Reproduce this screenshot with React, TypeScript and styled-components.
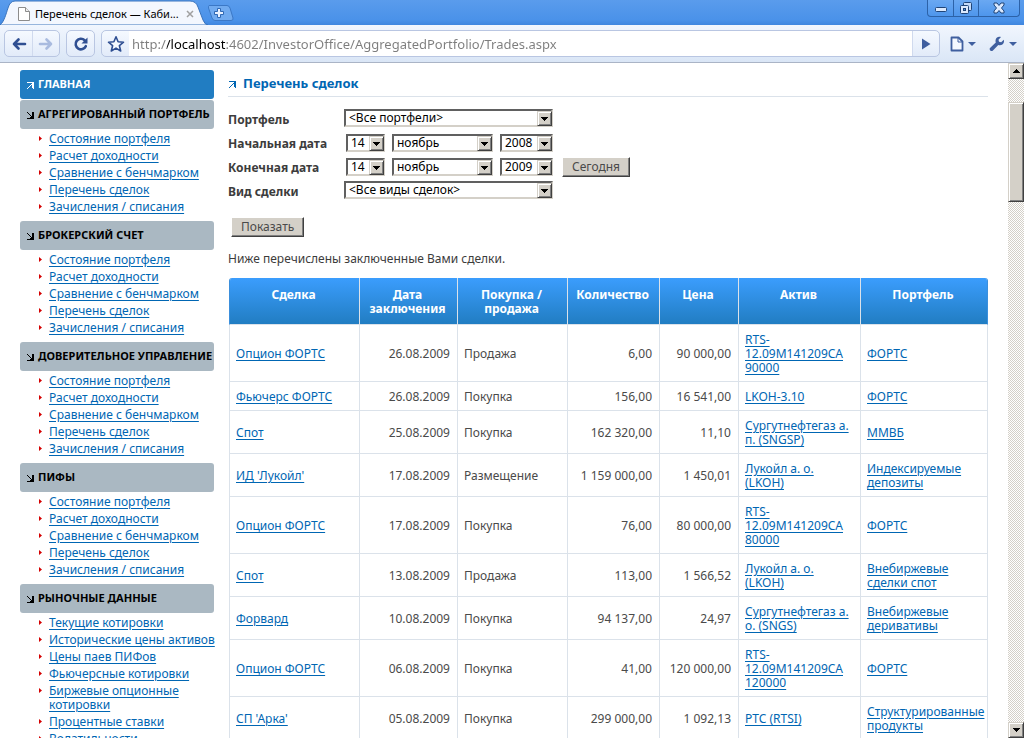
import React, { useState } from 'react';
import styled, { createGlobalStyle, css } from 'styled-components';

const GlobalStyle = createGlobalStyle`
  *, *::before, *::after { box-sizing: border-box; }
  html, body { height: 100%; margin: 0; }
  body {
    overflow: hidden;
    background: #fff;
    color: #3c3c3c;
    font: 12px/14px 'Noto Sans', sans-serif;
  }
  button, input, select { font: inherit; color: inherit; margin: 0; }
`;

/* ---------- browser window ---------- */

const Window = styled.div`
  display: flex;
  flex-direction: column;
  height: 100vh;
`;

const TitleBar = styled.header`
  display: flex;
  align-items: flex-start;
  flex: none;
  height: 25px;
  background: linear-gradient(#5a9cec, #4a92e9 80%, #3f86df);
`;

const Tab = styled.div`
  position: relative;
  display: flex;
  align-items: center;
  gap: 4px;
  width: 208px;
  height: 25px;
  padding: 2px 14px 0 17px;
  color: #000;
  font-size: 11px;
`;

const TabShape = styled.svg`
  position: absolute;
  inset: 0;
  z-index: 0;
`;

const TabTitle = styled.span`
  position: relative;
  flex: 1;
  white-space: nowrap;
`;

const PlainButton = styled.button`
  position: relative;
  display: flex;
  align-items: center;
  justify-content: center;
  padding: 0;
  border: 0;
  background: none;
`;

const NewTab = styled(PlainButton)`
  width: 26px;
  height: 16px;
  margin-top: 5px;
`;

const WindowButtons = styled.div`
  display: flex;
  height: 17px;
  margin-left: auto;
  margin-right: 4px;
  border: 1px solid #2c62a8;
  border-top: 0;
  border-radius: 0 0 4px 4px;
  background: linear-gradient(#6aa8f2, #4e96ec);
`;

const WindowButton = styled(PlainButton)<{ $wide?: boolean }>`
  width: ${(p) => (p.$wide ? 41 : 25)}px;
  & + & { border-left: 1px solid #2c62a8; }
`;

const Toolbar = styled.div`
  display: flex;
  align-items: center;
  flex: none;
  gap: 6px;
  height: 38px;
  padding: 0 4px;
  border-bottom: 1px solid #aab4c6;
  background: linear-gradient(#f1f6fe, #dae6f6);
`;

const Group = styled.div<{ $grow?: boolean }>`
  display: flex;
  flex: ${(p) => (p.$grow ? '1' : 'none')};
  height: 27px;
  border: 1px solid #b9c6e2;
  border-radius: 5px;
  background: linear-gradient(#f5f9ff, #e2ebf9);
  overflow: hidden;
`;

const ToolButton = styled(PlainButton)<{ $divided?: boolean }>`
  width: 27px;
  height: 25px;
  ${(p) => p.$divided && css`border-left: 1px solid #d0daee;`}
`;

const MenuButton = styled(PlainButton)`
  gap: 4px;
  width: 34px;
  height: 27px;
`;

const Address = styled.input`
  flex: 1;
  min-width: 0;
  height: 25px;
  padding: 0 3px;
  border: 0;
  outline: 0;
  background:
    linear-gradient(90deg, #7d7d7d 38px, #000 38px 97px, #7d7d7d 97px) text;
  color: transparent;
  font-size: 13px;
`;

const AddressBox = styled.div`
  display: flex;
  flex: 1;
  background: #fff;
`;

const Viewport = styled.div`
  display: flex;
  flex: 1;
  min-height: 0;
`;

const Page = styled.div`
  display: flex;
  align-items: flex-start;
  flex: 1;
  gap: 14px;
  min-width: 0;
  padding: 7px 20px 0;
  overflow: hidden;
`;

const ScrollBar = styled.div`
  display: flex;
  flex-direction: column;
  flex: none;
  width: 16px;
  background: repeating-conic-gradient(#d4d0c8 0 25%, #fff 0 50%) 0 0 / 2px 2px;
`;

const raised = css`
  border: 1px solid;
  border-color: #d4d0c8 #404040 #404040 #d4d0c8;
  box-shadow: inset 1px 1px #fff, inset -1px -1px #808080;
  background: #d4d0c8;
`;

const ScrollButton = styled(PlainButton)`
  flex: none;
  height: 16px;
  ${raised}
`;

const ScrollTrack = styled.div`
  flex: 1;
  padding-top: 23px;
`;

const ScrollThumb = styled.div`
  height: 100px;
  ${raised}
`;

/* ---------- side navigation ---------- */

const Nav = styled.nav`
  flex: none;
  width: 194px;
`;

const NavHeading = styled.a<{ $active?: boolean }>`
  display: flex;
  align-items: center;
  gap: 4px;
  height: 29px;
  padding: 0 0 1px 7px;
  margin-bottom: ${(p) => (p.$active ? 1 : 0)}px;
  border-radius: 3px;
  background: ${(p) => (p.$active ? '#217dc2' : '#aab8c2')};
  color: ${(p) => (p.$active ? '#fff' : '#000')};
  font: bold 11px/14px 'Noto Sans', sans-serif;
  text-decoration: none;
  text-transform: uppercase;
  white-space: nowrap;
`;

const NavList = styled.ul`
  margin: 0;
  padding: 3px 0 4px 19px;
  list-style: none;
`;

const NavItem = styled.li`
  display: flex;
  gap: 7px;
  margin-bottom: 3px;
  white-space: pre;
`;

const Bullet = styled.svg`
  flex: none;
  margin-top: 4px;
`;

const Link = styled.a`
  color: #0066b3;
  text-decoration: underline;
  text-underline-offset: 2px;
`;

/* ---------- main column ---------- */

const Main = styled.main`
  flex: 1;
  min-width: 0;
`;

const Title = styled.h1`
  display: flex;
  align-items: center;
  gap: 7px;
  height: 27px;
  margin: 0 0 10px;
  padding-left: 1px;
  border-bottom: 1px solid #dbe2ea;
  color: #0066b3;
  font: bold 13px/18px 'Noto Sans', sans-serif;
`;

const Row = styled.div`
  display: flex;
  align-items: center;
  height: 24px;
`;

const Label = styled.label`
  width: 116px;
  padding-top: 2px;
  font-weight: bold;
`;

const Fields = styled.div<{ $inset?: boolean }>`
  display: flex;
  align-items: center;
  gap: 7px;
  padding: ${(p) => (p.$inset ? '0 0 0 2px' : '0 0 2px')};
`;

const SelectBox = styled.span<{ $width: number }>`
  position: relative;
  display: flex;
  width: ${(p) => p.$width}px;
  height: 18px;
  border: 2px solid;
  border-color: #606060 #d4d0c8 #d4d0c8 #606060;
  background: #fff;
`;

const Select = styled.select`
  width: 100%;
  padding: 0 3px;
  border: 0;
  outline: 0;
  appearance: none;
  background: none;
  color: #000;
  line-height: 14px;
`;

const SelectArrow = styled.span`
  position: absolute;
  top: 0;
  right: -1px;
  display: flex;
  align-items: center;
  justify-content: center;
  width: 15px;
  height: 15px;
  pointer-events: none;
  ${raised}
`;

const Button = styled.button`
  height: 20px;
  padding: 0 9px;
  border: 1px solid;
  border-color: #fff #404040 #404040 #fff;
  box-shadow: inset -1px -1px #808080;
  background: #d4d0c8;
  color: #4a4a4a;
  ${SelectBox} + & { margin-left: 2px; }
`;

const Submit = styled.div`
  padding: 14px 3px 15px;
`;

const Note = styled.p`
  margin: 0 0 12px;
`;

const TableArea = styled.div`
  padding-left: 1px;
`;

const Table = styled.table`
  width: 100%;
  table-layout: fixed;
  border-spacing: 0;
`;

const Th = styled.th`
  height: 47px;
  padding: 10px 5px 0 3px;
  border-right: 1px solid #dbe2ea;
  border-bottom: 1px solid #dbe2ea;
  background: linear-gradient(#3b9dfd, #217dc2);
  background-clip: padding-box;
  color: #fff;
  vertical-align: top;
  white-space: pre;
  &:first-child { border-top-left-radius: 3px; border-left: 1px solid #3b8fdc; }
  &:last-child { border-top-right-radius: 3px; border-right-color: #3b8fdc; }
`;

const Td = styled.td<{ $right?: boolean }>`
  padding: 8px 7px 6px 6px;
  border-right: 1px solid #dbe2ea;
  border-bottom: 1px solid #dbe2ea;
  color: #4a4a4a;
  text-align: ${(p) => (p.$right ? 'right' : 'left')};
  white-space: pre;
  &:first-child { border-left: 1px solid #dbe2ea; }
`;

/* ---------- data ---------- */

const accountLinks = [
  'Состояние портфеля',
  'Расчет доходности',
  'Сравнение с бенчмарком',
  'Перечень сделок',
  'Зачисления / списания',
];

const sections = [
  { title: 'Агрегированный портфель', links: accountLinks },
  { title: 'Брокерский счет', links: accountLinks },
  { title: 'Доверительное управление', links: accountLinks },
  { title: 'ПИФы', links: accountLinks },
  {
    title: 'Рыночные данные',
    links: [
      'Текущие котировки',
      'Исторические цены активов',
      'Цены паев ПИФов',
      'Фьючерсные котировки',
      'Биржевые опционные\nкотировки',
      'Процентные ставки',
      'Волатильности',
    ],
  },
];

const columns = [
  { title: 'Сделка', width: 131 },
  { title: 'Дата\nзаключения', width: 98 },
  { title: 'Покупка /\nпродажа', width: 110 },
  { title: 'Количество', width: 92 },
  { title: 'Цена', width: 79 },
  { title: 'Актив', width: 122 },
  { title: 'Портфель', width: 127 },
];

const trades = [
  ['Опцион ФОРТС', '26.08.2009', 'Продажа', '6,00', '90 000,00', 'RTS-\n12.09M141209CA\n90000', 'ФОРТС'],
  ['Фьючерс ФОРТС', '26.08.2009', 'Покупка', '156,00', '16 541,00', 'LKOH-3.10', 'ФОРТС'],
  ['Спот', '25.08.2009', 'Покупка', '162 320,00', '11,10', 'Сургутнефтегаз а.\nп. (SNGSP)', 'ММВБ'],
  ["ИД 'Лукойл'", '17.08.2009', 'Размещение', '1 159 000,00', '1 450,01', 'Лукойл а. о.\n(LKOH)', 'Индексируемые\nдепозиты'],
  ['Опцион ФОРТС', '17.08.2009', 'Покупка', '76,00', '80 000,00', 'RTS-\n12.09M141209CA\n80000', 'ФОРТС'],
  ['Спот', '13.08.2009', 'Продажа', '113,00', '1 566,52', 'Лукойл а. о.\n(LKOH)', 'Внебиржевые\nсделки спот'],
  ['Форвард', '10.08.2009', 'Покупка', '94 137,00', '24,97', 'Сургутнефтегаз а.\nо. (SNGS)', 'Внебиржевые\nдеривативы'],
  ['Опцион ФОРТС', '06.08.2009', 'Покупка', '41,00', '120 000,00', 'RTS-\n12.09M141209CA\n120000', 'ФОРТС'],
  ["СП 'Арка'", '05.08.2009', 'Покупка', '299 000,00', '1 092,13', 'РТС (RTSI)', 'Структурированные\nпродукты'],
];

/* ---------- icons ---------- */

const UpRight = () => (
  <svg width="7" height="9" viewBox="0 0 7 9" shapeRendering="crispEdges" aria-hidden>
    <path d="M0 2h7v7H6V3H0z" fill="currentColor" />
    <path d="M5 3h1v1H5zM4 4h1v1H4zM3 5h1v1H3zM2 6h1v1H2zM1 7h1v1H1zM0 8h1v1H0z" fill="currentColor" />
    <path d="M5 3h1v5H5z" fill="currentColor" />
  </svg>
);

const DownRight = () => (
  <svg width="7" height="9" viewBox="0 0 7 9" shapeRendering="crispEdges" aria-hidden>
    <path d="M5 2h2v7H0V8h5z" fill="currentColor" />
    <path d="M0 2h1v1H0zM1 3h1v1H1zM2 4h1v1H2zM3 5h1v1H3zM4 6h1v1H4zM3 7h2v1H3z" fill="currentColor" />
  </svg>
);

const Caret = ({ up }: { up?: boolean }) => (
  <svg width="7" height="4" viewBox="0 0 7 4" shapeRendering="crispEdges" aria-hidden>
    <path d={up ? 'M3 0h1v1h1v1h1v1h1v1H0V3h1V2h1V1h1z' : 'M0 0h7v1H6v1H5v1H4v1H3V3H2V2H1V1H0z'} fill="#000" />
  </svg>
);

const MenuCaret = () => (
  <svg width="8" height="4" viewBox="0 0 8 4" aria-hidden>
    <path d="M0 0h8L4 4z" fill="#3f5f9f" />
  </svg>
);

/* ---------- pieces ---------- */

type DropDownProps = { id?: string; label?: string; width: number; options: string[] };

const DropDown = ({ id, label, width, options }: DropDownProps) => (
  <SelectBox $width={width}>
    <Select id={id} aria-label={label}>
      {options.map((o) => <option key={o}>{o}</option>)}
    </Select>
    <SelectArrow><Caret /></SelectArrow>
  </SelectBox>
);

const Chrome = () => {
  const [url, setUrl] = useState('http://localhost:4602/InvestorOffice/AggregatedPortfolio/Trades.aspx');
  return (
    <>
      <TitleBar>
        <Tab>
          <TabShape width="208" height="25" viewBox="0 0 208 25" aria-hidden>
            <path d="M0 25C4 22 6 14 8 8Q10 1 15 1H190Q196 1 198 7L203 20Q205 25 208 25z" fill="#f3f7fe" stroke="#3a74bd" />
          </TabShape>
          <PlainButton as="span">
            <svg width="14" height="16" viewBox="0 0 14 16" aria-hidden>
              <path d="M1.500 1.500h7l4 4v9h-11z" fill="#fff" stroke="#8c8c8c" />
              <path d="M8.500 1.500v4h4" fill="#eee" stroke="#8c8c8c" />
            </svg>
          </PlainButton>
          <TabTitle>Перечень сделок — Каби...</TabTitle>
          <PlainButton aria-label="Закрыть вкладку">
            <svg width="8" height="8" viewBox="0 0 8 8" aria-hidden>
              <path d="M1 1l6 6M7 1l-6 6" stroke="#a0a0a0" strokeWidth="1.500" />
            </svg>
          </PlainButton>
        </Tab>
        <NewTab aria-label="Новая вкладка">
          <svg width="26" height="16" viewBox="0 0 26 16" aria-hidden>
            <path d="M1 .5H19Q21 .5 22 3L25 13Q25.500 15.500 23 15.500H7Q5 15.500 4 13L.5 3Q0 .5 1 .5z" fill="#71abf0" stroke="#3b78c6" />
            <path d="M9.500 3.500h3v3h3v3h-3v3h-3v-3h-3v-3h3z" fill="#e9f2ff" stroke="#2f68b4" />
          </svg>
        </NewTab>
        <WindowButtons>
          <WindowButton aria-label="Свернуть">
            <svg width="12" height="8" viewBox="0 0 12 8" aria-hidden>
              <rect x=".5" y="3.500" width="11" height="4" rx="1" fill="#dbe9fd" stroke="#1f4478" />
            </svg>
          </WindowButton>
          <WindowButton aria-label="Развернуть">
            <svg width="14" height="14" viewBox="0 0 14 14" aria-hidden>
              <rect x="4.500" y="1.500" width="8" height="8" rx="1" fill="#c5dbf9" stroke="#1f4478" />
              <rect x="1.500" y="4.500" width="8" height="8" rx="1" fill="#dbe9fd" stroke="#1f4478" />
              <rect x="4.500" y="7.500" width="2" height="2" fill="#4e96ec" stroke="#1f4478" />
            </svg>
          </WindowButton>
          <WindowButton $wide aria-label="Закрыть">
            <svg width="12" height="12" viewBox="0 0 12 12" aria-hidden>
              <path d="M1 1h3l2 2.500L8 1h3v2L8.500 6 11 9v2H8L6 8.500 4 11H1V9l2.500-3L1 3z" fill="#dbe9fd" stroke="#1f4478" />
            </svg>
          </WindowButton>
        </WindowButtons>
      </TitleBar>
      <Toolbar>
        <Group>
          <ToolButton aria-label="Назад">
            <svg width="16" height="16" viewBox="0 0 16 16" aria-hidden>
              <path d="M14 8H3M7.500 3.500L3 8l4.500 4.500" fill="none" stroke="#2f4f92" strokeWidth="2.600" strokeLinecap="round" strokeLinejoin="round" />
            </svg>
          </ToolButton>
          <ToolButton aria-label="Вперед" $divided>
            <svg width="16" height="16" viewBox="0 0 16 16" aria-hidden>
              <path d="M2 8h11M8.500 3.500L13 8l-4.500 4.500" fill="none" stroke="#a9bbdf" strokeWidth="2.600" strokeLinecap="round" strokeLinejoin="round" />
            </svg>
          </ToolButton>
        </Group>
        <Group>
          <ToolButton aria-label="Обновить">
            <svg width="16" height="16" viewBox="0 0 16 16" aria-hidden>
              <path d="M12.800 10.200A5.300 5.300 0 1 1 11.600 4.200" fill="none" stroke="#2f4f92" strokeWidth="2.600" strokeLinecap="round" />
              <path d="M14.500 1.500V7.500H8.500z" fill="#2f4f92" />
            </svg>
          </ToolButton>
        </Group>
        <Group $grow>
          <ToolButton aria-label="Добавить в закладки">
            <svg width="18" height="18" viewBox="0 0 18 18" aria-hidden>
              <path d="M9 1.800l2.100 5 5.400.4-4.100 3.500 1.300 5.300L9 13.100 4.300 16l1.300-5.300L1.500 7.200l5.400-.4z" fill="#f5f9ff" stroke="#2f4f92" strokeWidth="1.600" strokeLinejoin="round" />
            </svg>
          </ToolButton>
          <AddressBox>
            <Address aria-label="Адрес" value={url} onChange={(e) => setUrl(e.target.value)} />
          </AddressBox>
          <ToolButton aria-label="Перейти" $divided>
            <svg width="10" height="12" viewBox="0 0 10 12" aria-hidden>
              <path d="M1 .5L9.500 6 1 11.500z" fill="#3f5f9f" />
            </svg>
          </ToolButton>
        </Group>
        <MenuButton aria-label="Страница">
          <svg width="14" height="16" viewBox="0 0 14 16" aria-hidden>
            <path d="M1.500 1.500h7l4 4v9h-11z" fill="#f5f9ff" stroke="#3f5f9f" strokeWidth="1.800" strokeLinejoin="round" />
            <path d="M8 2v4h4" fill="none" stroke="#3f5f9f" />
          </svg>
          <MenuCaret />
        </MenuButton>
        <MenuButton aria-label="Настройки">
          <svg width="16" height="16" viewBox="0 0 16 16" aria-hidden>
            <path d="M14.800 3.800l-2.600 2.400-2.200-.5-.5-2L12 1.100C9.500 0 6.600 1.600 6.500 4.700c0 .8.100 1.200.3 1.700L1 12c-1.200 1.300.9 3.900 2.700 2.700l5.600-5.600c3.300 1 6.600-1.600 5.500-5.300z" fill="#3f5f9f" />
          </svg>
          <MenuCaret />
        </MenuButton>
      </Toolbar>
    </>
  );
};

const SideNav = () => (
  <Nav>
    <NavHeading href="#" $active><UpRight />Главная</NavHeading>
    {sections.map((s) => (
      <React.Fragment key={s.title}>
        <NavHeading href="#"><DownRight />{s.title}</NavHeading>
        <NavList>
          {s.links.map((l) => (
            <NavItem key={l}>
              <Bullet width="3" height="5" viewBox="0 0 3 5" aria-hidden>
                <path d="M0 0l3 2.500L0 5z" fill="#d40000" />
              </Bullet>
              <Link href="#">{l}</Link>
            </NavItem>
          ))}
        </NavList>
      </React.Fragment>
    ))}
  </Nav>
);

const Filters = () => (
  <form onSubmit={(e) => e.preventDefault()}>
    <Row>
      <Label htmlFor="portfolio">Портфель</Label>
      <Fields><DropDown id="portfolio" width={209} options={['<Все портфели>']} /></Fields>
    </Row>
    <Row>
      <Label htmlFor="from">Начальная дата</Label>
      <Fields $inset>
        <DropDown id="from" width={39} options={['14']} />
        <DropDown label="Месяц начала" width={101} options={['ноябрь']} />
        <DropDown label="Год начала" width={53} options={['2008']} />
      </Fields>
    </Row>
    <Row>
      <Label htmlFor="to">Конечная дата</Label>
      <Fields $inset>
        <DropDown id="to" width={39} options={['14']} />
        <DropDown label="Месяц окончания" width={101} options={['ноябрь']} />
        <DropDown label="Год окончания" width={53} options={['2009']} />
        <Button type="button">Сегодня</Button>
      </Fields>
    </Row>
    <Row>
      <Label htmlFor="kind">Вид сделки</Label>
      <Fields><DropDown id="kind" width={209} options={['<Все виды сделок>']} /></Fields>
    </Row>
    <Submit><Button type="submit">Показать</Button></Submit>
  </form>
);

const TradesTable = () => (
  <TableArea>
    <Table>
      <colgroup>
        {columns.map((c) => <col key={c.title} width={c.width} />)}
      </colgroup>
      <thead>
        <tr>{columns.map((c) => <Th key={c.title}>{c.title}</Th>)}</tr>
      </thead>
      <tbody>
        {trades.map((t, i) => (
          <tr key={i}>
            {t.map((cell, j) => (
              <Td key={j} $right={j === 1 || j === 3 || j === 4}>
                {j === 0 || j > 4 ? <Link href="#">{cell}</Link> : cell}
              </Td>
            ))}
          </tr>
        ))}
      </tbody>
    </Table>
  </TableArea>
);

export default function App() {
  return (
    <Window>
      <GlobalStyle />
      <Chrome />
      <Viewport>
        <Page>
          <SideNav />
          <Main>
            <Title><UpRight />Перечень сделок</Title>
            <Filters />
            <Note>Ниже перечислены заключенные Вами сделки.</Note>
            <TradesTable />
          </Main>
        </Page>
        <ScrollBar>
          <ScrollButton aria-label="Вверх"><Caret up /></ScrollButton>
          <ScrollTrack><ScrollThumb /></ScrollTrack>
          <ScrollButton aria-label="Вниз"><Caret /></ScrollButton>
        </ScrollBar>
      </Viewport>
    </Window>
  );
}
